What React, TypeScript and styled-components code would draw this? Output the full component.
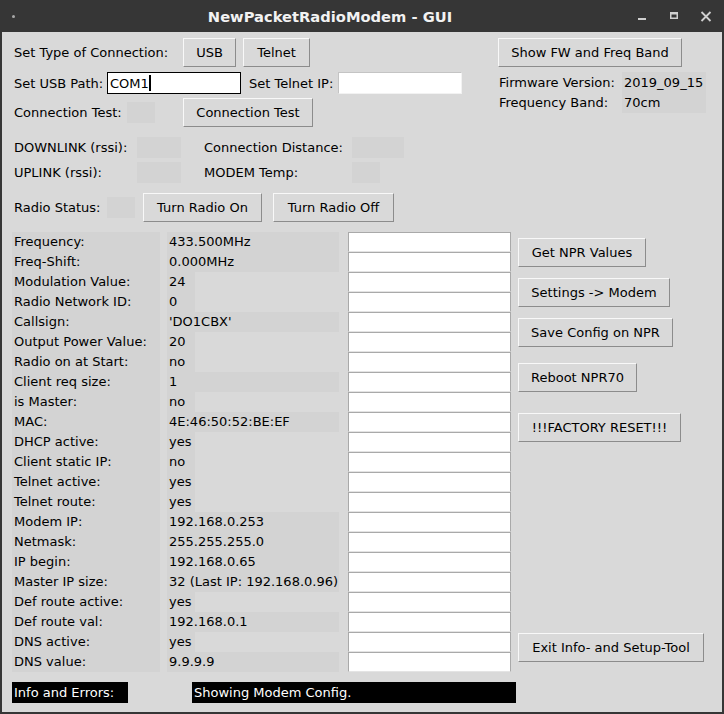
import React from "react";
import styled, { createGlobalStyle } from "styled-components";

const Global = createGlobalStyle`
  html, body { margin: 0; padding: 0; background: #353535; }
  body { width: 724px; height: 714px; overflow: hidden; font-family: "DejaVu Sans", "Liberation Sans", sans-serif; }
  * { box-sizing: border-box; }
`;

const Window = styled.div`
  width: 724px;
  height: 714px;
  background: #363636;
  display: flex;
  flex-direction: column;
  padding: 0 2px 2px 2px;
`;

const TitleBar = styled.div`
  height: 32px;
  flex-shrink: 0;
  display: flex;
  align-items: center;
`;

const DotSlot = styled.div`
  width: 22px;
  height: 32px;
  display: flex;
  align-items: center;
  justify-content: center;
`;

const Dot = styled.span`
  width: 3px;
  height: 3px;
  border-radius: 50%;
  background: #a8a8a8;
`;

const Title = styled.div`
  flex: 1;
  text-align: center;
  color: #f2f2f2;
  font-weight: bold;
  font-size: 14.7px;
  font-family: "DejaVu Sans", sans-serif;
`;

const Controls = styled.div`
  width: 86px;
  height: 32px;
  display: flex;
  gap: 20px;
`;

const Content = styled.div`
  flex: 1;
  background: #d9d9d9;
  padding: 6px 0 0 10px;
  display: flex;
  flex-direction: column;
  font-size: 13px;
  color: #000;
`;

const Top = styled.div`
  display: flex;
`;

const LeftCol = styled.div`
  width: 486px;
  display: flex;
  flex-direction: column;
`;

const RightCol = styled.div`
  display: flex;
  flex-direction: column;
`;

const Row = styled.div<{ $mt?: number; $h: number }>`
  display: flex;
  align-items: center;
  height: ${(p) => p.$h}px;
  margin-top: ${(p) => p.$mt ?? 0}px;
`;

const Label = styled.div<{ $w?: number; $ml?: number }>`
  width: ${(p) => (p.$w ? `${p.$w}px` : "auto")};
  margin-left: ${(p) => p.$ml ?? 0}px;
  padding: 0 2px;
  white-space: nowrap;
  line-height: 15px;
  flex-shrink: 0;
`;

const Button = styled.button<{ $w: number; $ml?: number }>`
  width: ${(p) => p.$w}px;
  height: 29px;
  margin: 0 0 0 ${(p) => p.$ml ?? 0}px;
  padding: 0;
  flex-shrink: 0;
  background: #d9d9d9;
  color: #000;
  font-family: "DejaVu Sans", sans-serif;
  font-size: 13px;
  border: 1px solid;
  border-color: #f8f8f8 #8c8c8c #8c8c8c #f8f8f8;
  text-align: center;
  white-space: nowrap;
`;

const StatusBox = styled.div<{ $w: number; $ml?: number }>`
  width: ${(p) => p.$w}px;
  height: 21px;
  margin-left: ${(p) => p.$ml ?? 0}px;
  background: #d3d3d3;
  flex-shrink: 0;
`;

const Entry = styled.div<{ $w: number; $focus?: boolean }>`
  width: ${(p) => p.$w}px;
  height: 22px;
  background: #fff;
  border: 1px solid;
  border-color: ${(p) => (p.$focus ? "#000" : "#c4c4c4 #f2f2f2 #f2f2f2 #c4c4c4")};
  padding: 0 2px;
  display: flex;
  align-items: center;
  line-height: 15px;
  flex-shrink: 0;
`;

const Caret = styled.span`
  display: inline-block;
  width: 2px;
  height: 16px;
  background: #000;
  margin-left: 0;
`;

const InfoGrid = styled.div`
  margin-top: 5px;
  display: grid;
  grid-template-columns: 124px 84px;
  grid-template-rows: 20px 21px;
`;

const InfoKey = styled.div`
  padding-left: 1px;
  display: flex;
  align-items: center;
  white-space: nowrap;
`;

const InfoVal = styled.div`
  background: #d3d3d3;
  padding-left: 2px;
  display: flex;
  align-items: center;
  white-space: nowrap;
`;

const Table = styled.div`
  margin-top: 10px;
  display: grid;
  grid-template-columns: 148px 179px 172px 1fr;
  grid-template-rows: repeat(22, 20px);
`;

const KeyCell = styled.div<{ $row: number }>`
  grid-column: 1;
  grid-row: ${(p) => p.$row};
  background: #d3d3d3;
  padding-left: 2px;
  line-height: 20px;
  white-space: nowrap;
`;

const ValCell = styled.div<{ $row: number; $full: boolean }>`
  grid-column: 2;
  grid-row: ${(p) => p.$row};
  justify-self: start;
  margin-left: 7px;
  width: ${(p) => (p.$full ? 172 : 28)}px;
  background: #d3d3d3;
  padding-left: 2px;
  line-height: 20px;
  white-space: nowrap;
`;

const TableEntry = styled.div<{ $row: number }>`
  grid-column: 3;
  grid-row: ${(p) => p.$row};
  margin-left: 9px;
  width: 163px;
  height: 20px;
  background: #fff;
  border-style: solid;
  border-width: 1px;
  border-color: #a9a9a9 #a9a9a9 #e4e4e4 #a9a9a9;
`;

const SideButton = styled(Button)<{ $row: number; $off: number }>`
  grid-column: 4;
  grid-row: ${(p) => p.$row} / span 2;
  align-self: start;
  justify-self: start;
  margin-left: 7px;
  margin-top: ${(p) => p.$off}px;
`;

const Bottom = styled.div`
  margin-top: 10px;
  display: flex;
  gap: 64px;
`;

const BlackBox = styled.div<{ $w: number }>`
  width: ${(p) => p.$w}px;
  height: 21px;
  background: #000;
  color: #fff;
  padding-left: 2px;
  line-height: 21px;
  white-space: nowrap;
`;

const rows: [string, string, boolean][] = [
  ["Frequency:", "433.500MHz", true],
  ["Freq-Shift:", "0.000MHz", true],
  ["Modulation Value:", "24", false],
  ["Radio Network ID:", "0", false],
  ["Callsign:", "'DO1CBX'", true],
  ["Output Power Value:", "20", false],
  ["Radio on at Start:", "no", false],
  ["Client req size:", "1", true],
  ["is Master:", "no", false],
  ["MAC:", "4E:46:50:52:BE:EF", true],
  ["DHCP active:", "yes", false],
  ["Client static IP:", "no", false],
  ["Telnet active:", "yes", false],
  ["Telnet route:", "yes", false],
  ["Modem IP:", "192.168.0.253", true],
  ["Netmask:", "255.255.255.0", true],
  ["IP begin:", "192.168.0.65", true],
  ["Master IP size:", "32 (Last IP: 192.168.0.96)", true],
  ["Def route active:", "yes", false],
  ["Def route val:", "192.168.0.1", true],
  ["DNS active:", "yes", false],
  ["DNS value:", "9.9.9.9", true],
];

const sideButtons: { text: string; row: number; off: number; w: number }[] = [
  { text: "Get NPR Values", row: 1, off: 6, w: 128 },
  { text: "Settings -> Modem", row: 3, off: 6, w: 152 },
  { text: "Save Config on NPR", row: 5, off: 6, w: 155 },
  { text: "Reboot NPR70", row: 7, off: 11, w: 119 },
  { text: "!!!FACTORY RESET!!!", row: 10, off: 1, w: 163 },
  { text: "Exit Info- and Setup-Tool", row: 21, off: 1, w: 186 },
];

const iconColor = "#cfcfcf";

export default function App() {
  return (
    <>
      <Global />
      <Window>
        <TitleBar>
          <DotSlot>
            <Dot />
          </DotSlot>
          <Title>NewPacketRadioModem - GUI</Title>
          <Controls>
            <svg width="12" height="32" viewBox="0 0 12 32">
              <rect x="2" y="18" width="8" height="2" fill={iconColor} />
            </svg>
            <svg width="12" height="32" viewBox="0 0 12 32">
              <rect x="2.75" y="12.75" width="6.5" height="5.5" fill="none" stroke={iconColor} strokeWidth="1.5" />
              <rect x="2" y="12" width="8" height="2.5" fill={iconColor} />
            </svg>
            <svg width="12" height="32" viewBox="0 0 12 32">
              <path d="M1.5 12 L10.5 21 M10.5 12 L1.5 21" stroke={iconColor} strokeWidth="1.8" fill="none" />
            </svg>
          </Controls>
        </TitleBar>
        <Content>
          <Top>
            <LeftCol>
              <Row $h={29}>
                <Label $w={171}>Set Type of Connection:</Label>
                <Button $w={53}>USB</Button>
                <Button $w={67} $ml={7}>Telnet</Button>
              </Row>
              <Row $h={22} $mt={5}>
                <Label $w={95}>Set USB Path:</Label>
                <Entry $w={134} $focus>
                  COM1
                  <Caret />
                </Entry>
                <Label $w={91} $ml={6}>Set Telnet IP:</Label>
                <Entry $w={124} />
              </Row>
              <Row $h={29} $mt={4}>
                <Label $w={115}>Connection Test:</Label>
                <StatusBox $w={28} />
                <Button $w={130} $ml={28}>Connection Test</Button>
              </Row>
              <Row $h={21} $mt={10}>
                <Label $w={125}>DOWNLINK (rssi):</Label>
                <StatusBox $w={44} />
                <Label $w={150} $ml={21}>Connection Distance:</Label>
                <StatusBox $w={52} />
              </Row>
              <Row $h={21} $mt={4}>
                <Label $w={125}>UPLINK (rssi):</Label>
                <StatusBox $w={44} />
                <Label $w={150} $ml={21}>MODEM Temp:</Label>
                <StatusBox $w={28} />
              </Row>
              <Row $h={29} $mt={10}>
                <Label $w={95}>Radio Status:</Label>
                <StatusBox $w={28} />
                <Button $w={119} $ml={8}>Turn Radio On</Button>
                <Button $w={121} $ml={11}>Turn Radio Off</Button>
              </Row>
            </LeftCol>
            <RightCol>
              <Button $w={184}>Show FW and Freq Band</Button>
              <InfoGrid>
                <InfoKey>Firmware Version:</InfoKey>
                <InfoVal>2019_09_15</InfoVal>
                <InfoKey>Frequency Band:</InfoKey>
                <InfoVal>70cm</InfoVal>
              </InfoGrid>
            </RightCol>
          </Top>
          <Table>
            {rows.map(([k, v, full], i) => (
              <React.Fragment key={k}>
                <KeyCell $row={i + 1}>{k}</KeyCell>
                <ValCell $row={i + 1} $full={full}>
                  {v}
                </ValCell>
                <TableEntry $row={i + 1} />
              </React.Fragment>
            ))}
            {sideButtons.map((b) => (
              <SideButton key={b.text} $row={b.row} $off={b.off} $w={b.w}>
                {b.text}
              </SideButton>
            ))}
          </Table>
          <Bottom>
            <BlackBox $w={116}>Info and Errors:</BlackBox>
            <BlackBox $w={324}>Showing Modem Config.</BlackBox>
          </Bottom>
        </Content>
      </Window>
    </>
  );
}
